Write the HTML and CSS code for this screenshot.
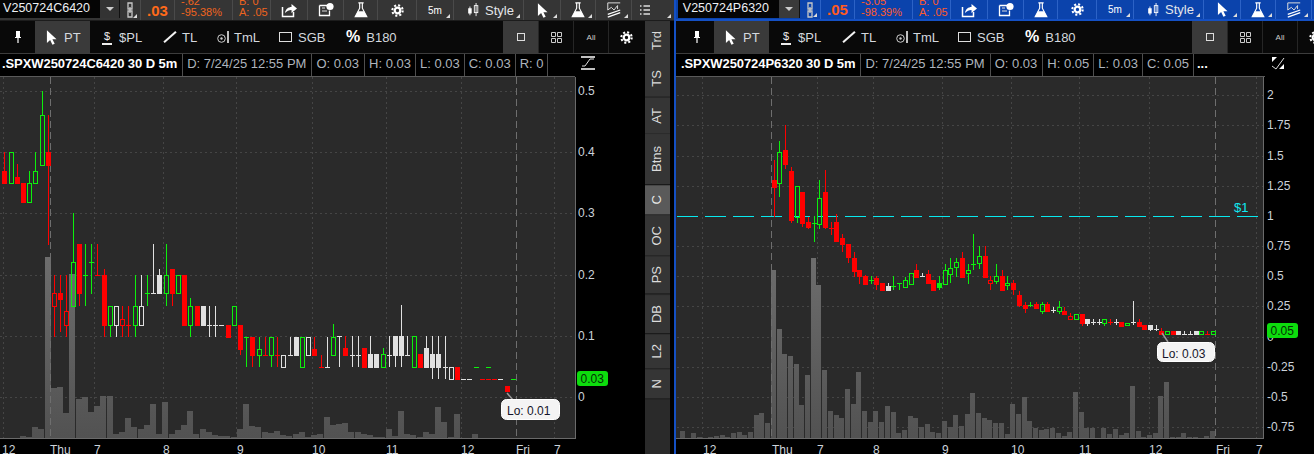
FILE: index.html
```html
<!DOCTYPE html>
<html lang="en">
<head>
<meta charset="utf-8">
<title>Option charts</title>
<link rel="stylesheet" href="styles.css">
</head>
<body>
<svg class="defs" width="0" height="0" aria-hidden="true">
  <symbol id="i-link" viewBox="0 0 8 16"><path d="M2 1h4v6H2zM2 9h4v6H2zM4 5v6" fill="none" stroke="#c8c8c8" stroke-width="1.3"/></symbol>
  <symbol id="i-share" viewBox="0 0 16 16"><path d="M1.500 5v9.500h11V10" fill="none" stroke="#fff" stroke-width="1.500"/><path d="M4 11c.5-4 3.500-6 6.500-6V2L16 6.500 10.500 11V8C8 8 6 9 4 11z" fill="#fff"/></symbol>
  <symbol id="i-note" viewBox="0 0 16 16"><path d="M1.500 3.500h9M1.500 3.500v10h10v-5" fill="none" stroke="#fff" stroke-width="1.300"/><path d="M4 6h3M4 9h5" stroke="#ddd"/><circle cx="12" cy="4.500" r="3.600" fill="#fff"/></symbol>
  <symbol id="i-flask" viewBox="0 0 16 18"><path d="M5 1h6M6.500 1v6L1.500 16.500h13L9.500 7V1" fill="none" stroke="#fff" stroke-width="1.300"/><path d="M4.500 10.500h7l3 6h-13z" fill="#fff"/></symbol>
  <symbol id="i-gear" viewBox="0 0 14 14"><circle cx="7" cy="7" r="3" fill="none" stroke="#fff" stroke-width="2.400"/><circle cx="7" cy="7" r="5.600" fill="none" stroke="#fff" stroke-width="2.200" stroke-dasharray="2.200 2.200"/></symbol>
  <symbol id="i-candle" viewBox="0 0 14 16"><path d="M3.500 4v10M10.500 0v15" stroke="#fff"/><rect x="1.500" y="6" width="4" height="6" fill="#fff"/><rect x="8.500" y="3" width="4" height="8" fill="none" stroke="#fff"/></symbol>
  <symbol id="i-cursor" viewBox="0 0 12 16"><path d="M1 0v14l3.500-3.200L7 16l2.500-1.200L7 9.800h4.500z" fill="#fff"/></symbol>
  <symbol id="i-chart" viewBox="0 0 16 18"><path d="M1 1h14M1 1v8l4-3 3 3 4-5v4" fill="none" stroke="#ddd" stroke-width="1.100"/><path d="M1 14L15 9M1 17l14-5" stroke="#fff" stroke-width="1.400"/></symbol>
  <symbol id="i-menu" viewBox="0 0 12 12"><path d="M1 2h1.500M1 6h1.500M1 10h1.500M4.500 2H11M4.500 6H11M4.500 10H11" stroke="#ddd" stroke-width="1.300"/></symbol>
  <symbol id="i-pin" viewBox="0 0 8 14"><path d="M2 1h4v6H2z" fill="#fff"/><path d="M1 7.500h6M4 7v6" stroke="#fff" stroke-width="1.200"/></symbol>
  <symbol id="i-time" viewBox="0 0 14 12"><circle cx="4.500" cy="7.500" r="3.800" fill="none" stroke="#ccc"/><circle cx="4.500" cy="7.500" r="1.200" fill="#ccc"/><path d="M11 0v12" stroke="#fff" stroke-width="1.500"/></symbol>
  <symbol id="i-one" viewBox="0 0 8 8"><rect x=".5" y=".5" width="7" height="7" fill="none" stroke="#ddd"/></symbol>
  <symbol id="i-four" viewBox="0 0 11 11"><path d="M.5.5h4v4h-4zM6.500.5h4v4h-4zM.5 6.500h4v4h-4zM6.500 6.500h4v4h-4z" fill="none" stroke="#ccc"/></symbol>
  <symbol id="i-curve" viewBox="0 0 14 14"><path d="M0 1h14M0 13h14" stroke="#fff" stroke-width="1.400"/><path d="M1 10h3l5-7h4" fill="none" stroke="#ddd"/></symbol>
  <symbol id="i-expand" viewBox="0 0 14 14"><path d="M1 1h5L1 6zM13 13H8l5-5z" fill="#fff"/><path d="M1 10l4 3 8-11" fill="none" stroke="#ddd"/></symbol>
</svg>

<main class="app">
  <section class="pane pane-left">
    <header class="topbar">
      <div class="sym">V250724C6420</div>
      <div class="dd"><span class="caret"></span></div>
      <div class="cell w-link corner"><svg class="ic-link"><use href="#i-link"/></svg></div>
      <div class="cell w-price price">.03</div>
      <div class="cell w-change quote"><span>-.62</span><span>-95.38%</span></div>
      <div class="cell w-ba quote"><span>B: 0</span><span>A: .05</span></div>
      <div class="cell w-share"><svg class="ic16"><use href="#i-share"/></svg></div>
      <div class="cell w-note"><svg class="ic16"><use href="#i-note"/></svg></div>
      <div class="cell w-flask"><svg class="ic16"><use href="#i-flask"/></svg></div>
      <div class="cell w-gear"><svg class="ic13"><use href="#i-gear"/></svg></div>
      <div class="cell w-5m corner period">5m</div>
      <div class="cell w-style corner style"><svg class="ic14"><use href="#i-candle"/></svg><span>Style</span></div>
      <div class="cell w-share corner"><svg class="ic-cursor"><use href="#i-cursor"/></svg></div>
      <div class="cell w-flask2 corner"><svg class="ic16"><use href="#i-flask"/></svg></div>
      <div class="cell w-note corner"><svg class="ic16"><use href="#i-chart"/></svg></div>
      <div class="cell w-menu corner"><svg class="ic12"><use href="#i-menu"/></svg></div>
    </header>
    <div class="pane-body">
      <div class="chart-col">
        <nav class="toolbar">
          <div class="tool t-pin"><svg class="ic-pin"><use href="#i-pin"/></svg></div>
          <div class="tool t-pt active"><svg class="ic-cursor"><use href="#i-cursor"/></svg><span>PT</span></div>
          <div class="tool t-pl"><span class="dollar">$</span><span>$PL</span></div>
          <div class="tool t-tl"><span class="slash"></span><span>TL</span></div>
          <div class="tool t-tml"><svg class="ic-time"><use href="#i-time"/></svg><span>TmL</span></div>
          <div class="tool t-sgb"><span class="sq"></span><span>SGB</span></div>
          <div class="tool t-b"><b class="pct">%</b><span>B180</span></div>
          <div class="spacer"></div>
          <div class="tool t-lay active"><svg class="ic8"><use href="#i-one"/></svg></div>
          <div class="tool t-lay sep"><svg class="ic11"><use href="#i-four"/></svg></div>
          <div class="tool t-lay sep all">All</div>
          <div class="tool t-lay sep"><svg class="ic13"><use href="#i-gear"/></svg></div>
        </nav>
        <div class="chart-head">
          <div class="cells">
            <div class="hc title">.SPXW250724C6420 30 D 5m</div>
            <div class="hc hc-date">D: 7/24/25 12:55 PM</div>
            <div class="hc hc-open">O: 0.03</div>
            <div class="hc">H: 0.03</div>
            <div class="hc">L: 0.03</div>
            <div class="hc">C: 0.03</div>
            <div class="hc">R: 0</div>
            <div class="hc hc-blank"></div>
          </div>
          <div class="axis-head"><svg class="ic14"><use href="#i-curve"/></svg></div>
        </div>
        <svg class="chart" id="chartL" viewBox="0 77 645 377" width="645" height="377">
          <rect class="plot" x="0" y="77" width="575" height="361"/>
          <g class="g-layer"></g><g class="v-layer"></g><g class="c-layer"></g>
          <path class="frame" d="M575.500 77v361.500H0"/>
          <g class="tick-text">
            <text x="578" y="95">0.5</text><text x="578" y="156">0.4</text><text x="578" y="217">0.3</text>
            <text x="578" y="279">0.2</text><text x="578" y="340">0.1</text><text x="578" y="401">0</text>
            <text x="2" y="454">12</text><text x="50" y="454">Thu</text><text x="94" y="454">7</text>
            <text x="163" y="454">8</text><text x="237" y="454">9</text><text x="312" y="454">10</text>
            <text x="386" y="454">11</text><text x="461" y="454">12</text><text x="516" y="454">Fri</text>
            <text x="554" y="454">7</text>
          </g>
          <rect class="last" x="577" y="371" width="31" height="15" rx="3"/>
          <text class="last-text" x="580.500" y="383">0.03</text>
          <path class="stem" d="M507 393l6 7"/>
          <rect class="call" x="501.500" y="399.500" width="58" height="20" rx="5"/>
          <text class="call-text" x="507" y="415">Lo: 0.01</text>
        </svg>
      </div>
      <aside class="strip">
        <div class="tab">Trd</div><div class="tab">TS</div><div class="tab">AT</div>
        <div class="tab tab-wide">Btns</div><div class="tab on">C</div><div class="tab">OC</div>
        <div class="tab">PS</div><div class="tab">DB</div><div class="tab">L2</div><div class="tab">N</div>
      </aside>
    </div>
  </section>

  <section class="pane pane-right">
    <header class="topbar blue">
      <div class="sym">V250724P6320</div>
      <div class="dd"><span class="caret"></span></div>
      <div class="cell w-link corner"><svg class="ic-link"><use href="#i-link"/></svg></div>
      <div class="cell w-price price">.05</div>
      <div class="cell w-change quote"><span>-3.05</span><span>-98.39%</span></div>
      <div class="cell w-ba quote"><span>B: 0</span><span>A: .05</span></div>
      <div class="cell w-share"><svg class="ic16"><use href="#i-share"/></svg></div>
      <div class="cell w-note"><svg class="ic16"><use href="#i-note"/></svg></div>
      <div class="cell w-flask"><svg class="ic16"><use href="#i-flask"/></svg></div>
      <div class="cell w-gear"><svg class="ic13"><use href="#i-gear"/></svg></div>
      <div class="cell w-5m corner period">5m</div>
      <div class="cell w-style corner style"><svg class="ic14"><use href="#i-candle"/></svg><span>Style</span></div>
      <div class="cell w-share corner"><svg class="ic-cursor"><use href="#i-cursor"/></svg></div>
      <div class="cell w-flask2 corner"><svg class="ic16"><use href="#i-flask"/></svg></div>
      <div class="cell w-note corner"><svg class="ic16"><use href="#i-chart"/></svg></div>
    </header>
    <nav class="toolbar">
      <div class="tool t-pin"><svg class="ic-pin"><use href="#i-pin"/></svg></div>
      <div class="tool t-pt active"><svg class="ic-cursor"><use href="#i-cursor"/></svg><span>PT</span></div>
      <div class="tool t-pl"><span class="dollar">$</span><span>$PL</span></div>
      <div class="tool t-tl"><span class="slash"></span><span>TL</span></div>
      <div class="tool t-tml"><svg class="ic-time"><use href="#i-time"/></svg><span>TmL</span></div>
      <div class="tool t-sgb"><span class="sq"></span><span>SGB</span></div>
      <div class="tool t-b"><b class="pct">%</b><span>B180</span></div>
      <div class="spacer"></div>
      <div class="tool t-lay active"><svg class="ic8"><use href="#i-one"/></svg></div>
      <div class="tool t-lay sep"><svg class="ic11"><use href="#i-four"/></svg></div>
      <div class="tool t-lay sep all">All</div>
      <div class="tool t-lay sep"><svg class="ic13"><use href="#i-gear"/></svg></div>
    </nav>
    <div class="chart-head">
      <div class="cells">
        <div class="hc title">.SPXW250724P6320 30 D 5m</div>
        <div class="hc hc-date">D: 7/24/25 12:55 PM</div>
        <div class="hc hc-open">O: 0.03</div>
        <div class="hc">H: 0.05</div>
        <div class="hc">L: 0.03</div>
        <div class="hc">C: 0.05</div>
        <div class="hc more">...</div>
      </div>
      <div class="axis-head"><svg class="ic14"><use href="#i-expand"/></svg></div>
    </div>
    <svg class="chart" id="chartR" viewBox="676 77 638 377" width="638" height="377">
      <rect class="plot" x="676" y="77" width="587" height="361"/>
      <g class="g-layer"></g><g class="v-layer"></g>
      <path class="price-line" d="M677 216.500H1262"/>
      <text class="price-tag" x="1234" y="212">$1</text>
      <g class="c-layer"></g>
      <path class="frame" d="M1263.500 77v361.500H676"/>
      <g class="tick-text">
        <text x="1267" y="99">2</text><text x="1267" y="129">1.75</text><text x="1267" y="160">1.5</text>
        <text x="1267" y="190">1.25</text><text x="1267" y="220">1</text><text x="1267" y="250">0.75</text>
        <text x="1267" y="280">0.5</text><text x="1267" y="310">0.25</text><text x="1267" y="341">0</text>
        <text x="1267" y="371">-0.25</text><text x="1267" y="401">-0.5</text><text x="1267" y="431">-0.75</text>
        <text x="703" y="454">12</text><text x="772" y="454">Thu</text><text x="817" y="454">7</text>
        <text x="873" y="454">8</text><text x="942" y="454">9</text><text x="1011" y="454">10</text>
        <text x="1079" y="454">11</text><text x="1149" y="454">12</text><text x="1216" y="454">Fri</text>
        <text x="1256" y="454">7</text>
      </g>
      <rect class="last" x="1267" y="323" width="31" height="15" rx="3"/>
      <text class="last-text" x="1270.500" y="335">0.05</text>
      <path class="stem" d="M1162 333l6 9"/>
      <rect class="call" x="1157.500" y="342.500" width="57" height="19" rx="5"/>
      <text class="call-text" x="1162" y="357.500">Lo: 0.03</text>
    </svg>
  </section>
</main>
<script src="chart.js"></script>
</body>
</html>
```
FILE: styles.css
```css
* { box-sizing: border-box; }
html, body { margin: 0; padding: 0; background: #000; overflow: hidden; }
body { font: 13px "Liberation Sans", Arial, sans-serif; color: #bdbdbd; }
.defs { position: absolute; }
svg { display: block; flex: none; }

.app { display: flex; width: 1314px; height: 454px; overflow: hidden; }
.pane { display: flex; flex-direction: column; height: 454px; overflow: hidden; }
.pane-left { width: 674px; flex: none; }
.pane-right { width: 640px; flex: none; border-left: 2px solid #1450c4; }
.pane-body { display: flex; flex: 1; min-height: 0; }
.chart-col { width: 645px; flex: none; display: flex; flex-direction: column; }

/* top quote bar */
.topbar { display: flex; height: 21px; flex: none; background: #353535; border-bottom: 1px solid #1c1c1c; overflow: hidden; }
.topbar.blue { background: #0b43ac; padding-left: 2px; border-bottom: 2px solid #1450c4; }
.sym { width: 100px; height: 18px; flex: none; background: #050505; color: #eef0f4; font-size: 12.500px; text-align: right; padding-right: 10px; line-height: 16px; white-space: nowrap; overflow: hidden; }
.dd { width: 20px; height: 18px; flex: none; background: #333; display: flex; align-items: center; justify-content: center; border-right: 1px solid #111; }
.blue .sym { width: 101px; }
.blue .dd { width: 21px; background: #3a3a3a; }
.caret { width: 0; height: 0; border: 4px solid transparent; border-top: 4px solid #ccc; border-bottom: 0; }
.cell { position: relative; flex: none; display: flex; align-items: center; justify-content: center; height: 20px; border-right: 1px solid #4a4a4a; color: #fff; }
.blue .cell { border-right-color: #2c62c6; height: 19px; }
.corner::after { content: ""; position: absolute; right: 3px; bottom: 2px; width: 0; height: 0; border-left: 4px solid transparent; border-bottom: 4px solid #ddd; }
.w-link { width: 21px; }
.w-price { width: 34px; }
.w-change { width: 58px; }
.w-ba { width: 38px; }
.w-share { width: 37px; }
.w-note { width: 36px; }
.w-flask { width: 34px; }
.w-flask2 { width: 35px; }
.w-gear { width: 39px; }
.w-5m { width: 37px; }
.w-style { width: 70px; }
.w-menu { width: 42px; border-right: 0; padding-right: 16px; }
.price { font-weight: 700; font-size: 15px; color: #ff6a1a; }
.blue .price { color: #ff5a1e; }
.quote { flex-direction: column; align-items: flex-start; justify-content: flex-start; padding-left: 6px; font-size: 11px; line-height: 11px; color: #f0641e; }
.blue .quote { color: #ff5a2a; }
.quote span:first-child { margin-top: -4px; }
.period { font-size: 10px; }
.style { justify-content: flex-start; gap: 5px; padding-left: 12px; color: #e4e6ea; }
.ic-link { width: 8px; height: 16px; }
.ic16 { width: 16px; height: 16px; }
.ic14 { width: 14px; height: 14px; }
.ic13 { width: 13px; height: 13px; }
.ic12 { width: 12px; height: 12px; }
.ic11 { width: 11px; height: 11px; }
.ic8 { width: 8px; height: 8px; }
.ic-cursor { width: 11px; height: 15px; }
.ic-pin { width: 8px; height: 14px; }
.ic-time { width: 14px; height: 12px; }

/* tool row */
.toolbar { display: flex; height: 33px; flex: none; background: #090909; border-bottom: 1px solid #3c3c3c; overflow: hidden; }
.pane-right .toolbar { padding-left: 3px; }
.tool { flex: none; display: flex; align-items: center; gap: 6px; color: #d4d8de; }
.active { background: #3a3a3a; }
.t-pin { width: 35px; justify-content: center; }
.t-pt { width: 55px; padding-left: 11px; gap: 7px; }
.t-pl { width: 65px; padding-left: 12px; gap: 7px; }
.t-tl { width: 50px; padding-left: 8px; gap: 5px; }
.t-tml { width: 63px; padding-left: 12px; gap: 3px; }
.t-sgb { width: 68px; padding-left: 11px; }
.t-b { width: 74px; padding-left: 10px; gap: 6px; }
.spacer { width: 93px; flex: none; }
.pane-right .spacer { width: 103px; }
.t-lay { width: 35px; justify-content: center; }
.sep { border-left: 1px solid #262626; }
.all { font-size: 8px; color: #ccc; }
.dollar { width: 10px; font-size: 11px; color: #eee; text-align: center; line-height: 13px; border-bottom: 2px solid #eee; }
.slash { width: 16px; height: 2px; margin: 0 -1px; background: #f2f2f2; transform: rotate(-42deg); }
.sq { width: 13px; height: 10px; border: 1px solid #ddd; }
.pct { font-size: 16px; color: #fff; }

/* study header */
.chart-head { display: flex; height: 23px; flex: none; background: #000; }
.cells { width: 575px; flex: none; display: flex; border-bottom: 1px solid #5a5a5a; }
.pane-right .cells { width: 589px; padding-left: 3px; }
.hc { flex: none; padding: 0 4px; line-height: 20px; color: #aeb4bc; border-right: 1px solid #4e4e4e; white-space: nowrap; }
.hc:last-child { border-right: 0; }
.hc-blank { flex: 1; }
.title { padding: 0 5px 0 2px; color: #fff; font-weight: 700; letter-spacing: -.08px; }
.hc-date { padding-right: 5px; }
.hc-open { padding-right: 5px; }
.more { color: #fff; font-weight: 700; padding-left: 3px; }
.axis-head { flex: 1; padding: 2px 0 0 6px; }

/* charts */
.chart { flex: none; background: #000; }
.chart rect, .chart line, .frame { shape-rendering: crispEdges; }
.plot { fill: #2a2a2a; }
.frame { fill: none; stroke: #6a6a6a; }
.grid { stroke: #454545; stroke-dasharray: 2 3; }
.day { stroke: #6e6e6e; stroke-dasharray: 7 4; }
.tick-text text { font: 12px "Liberation Sans", Arial, sans-serif; fill: #ccd3da; }
.price-line { fill: none; stroke: #08e8ee; stroke-width: 1; stroke-dasharray: 21 7; shape-rendering: crispEdges; }
.price-tag { font: 13px "Liberation Sans", Arial, sans-serif; fill: #10e8f0; }
.chart .last { fill: #0ddc0d; shape-rendering: geometricPrecision; }
.last-text { font: 12px "Liberation Sans", Arial, sans-serif; fill: #063006; }
.stem { stroke: #9a9a9a; stroke-width: 1.500; fill: none; }
.chart .call { fill: #f4f4f4; stroke: #fff; shape-rendering: geometricPrecision; }
.call-text { font: 12px "Liberation Sans", Arial, sans-serif; fill: #14142a; }

/* side tabs */
.strip { width: 25px; flex: none; display: flex; flex-direction: column; background: #2a2a2a; }
.tab { writing-mode: vertical-rl; transform: rotate(180deg); padding: 10px 0; text-align: center; line-height: 24px; background: #353535; color: #dcdcdc; border-top: 1px solid #1a1a1a; }
.tab:first-child { border-top: 0; }
.tab-wide { padding: 12px 0; }
.tab.on { background: #5a5a5a; color: #e8e8e8; }
```
FILE: chart.js
```js
var NS = "http://www.w3.org/2000/svg";
var COLORS = { r: "#ff0000", g: "#0cf00c", w: "#e0e0e0" };

function el(parent, tag, attrs) {
  var node = document.createElementNS(NS, tag);
  for (var k in attrs) node.setAttribute(k, attrs[k]);
  parent.appendChild(node);
  return node;
}
function bar(parent, x, y1, y2, fill) {
  if (y2 <= y1) y2 = y1 + 1;
  el(parent, "rect", { x: x, y: y1, width: 1, height: y2 - y1, fill: fill });
}
function candle(g, x, c, toY) {
  var col = COLORS[c[0][0]], kind = c[0][1];
  var top = Math.round(toY(c[1])), bt = Math.round(toY(c[2])), bb = Math.round(toY(c[3])), bot = Math.round(toY(c[4]));
  var cx = Math.round(x);
  if (kind === "d") {
    if (bot > top) bar(g, cx, top, bot, col);
    el(g, "rect", { x: cx - 2, y: bt, width: 5, height: 1, fill: col });
    return;
  }
  if (bt > top) bar(g, cx, top, bt, col);
  if (bot > bb) bar(g, cx, bb, bot, col);
  if (kind === "s") {
    el(g, "rect", { x: cx - 2, y: bt, width: 5, height: Math.max(bb - bt, 1) + 1, fill: col });
  } else {
    el(g, "rect", { x: cx - 1.5, y: bt + 0.5, width: 4, height: Math.max(bb - bt, 1), fill: "none", stroke: col });
  }
}
function build(cfg) {
  var svg = document.getElementById(cfg.id);
  var grid = svg.querySelector(".g-layer"), vol = svg.querySelector(".v-layer"), can = svg.querySelector(".c-layer");
  cfg.hLines.forEach(function (y) { el(grid, "line", { "class": "grid", x1: cfg.x0, x2: cfg.x1, y1: y + 0.5, y2: y + 0.5 }); });
  cfg.vLines.forEach(function (x) { el(grid, "line", { "class": "grid", x1: x + 0.5, x2: x + 0.5, y1: 77, y2: 438 }); });
  var defs = el(svg, "defs", {});
  var grad = el(defs, "linearGradient", { id: cfg.id + "g", gradientUnits: "userSpaceOnUse", x1: 0, x2: 0, y1: 250, y2: 438 });
  el(grad, "stop", { offset: 0, "stop-color": "#6e6e6e" });
  el(grad, "stop", { offset: 1, "stop-color": "#525252" });
  cfg.vol.forEach(function (y, i) {
    var px = cfg.xAt(i - cfg.volStart);
    if (y < 438) el(vol, "rect", { x: Math.round(px - cfg.pitch / 2), y: Math.round(y), width: Math.floor(cfg.pitch), height: 438 - Math.round(y), fill: "url(#" + cfg.id + "g)" });
  });
  cfg.days.forEach(function (x) { el(vol, "line", { "class": "day", x1: x + 0.5, x2: x + 0.5, y1: 77, y2: 438 }); });
  cfg.candles.forEach(function (set) {
    set.list.forEach(function (c, i) { candle(can, cfg.xAt(set.start + i), c, set.toY); });
  });
  (cfg.extra || []).forEach(function (e) { candle(can, cfg.xAt(e[0]), e[1], cfg.candles[0].toY); });
}

/* Left chart: y values are thirds of a pixel from y = 264 */
var z264 = function (z) { return 264 + z / 3; };
var leftCandles = [
  ["rs",-336,-280,-242,-242],["gh",-335,-335,-242,-242],["rs",-300,-260,-242,-242],["rs",-242,-242,-187,-187],
  ["gh",-280,-242,-187,-187],["gh",-336,-278,-242,-242],["gh",-519,-446,-298,-298],["rs",-446,-336,-298,-57],
  ["rh",33,88,125,218],["rs",33,88,106,205],["rh",33,142,183,218],["gh",-154,-5,125,125],["rs",-60,-60,88,125],
  ["gd",-60,34,34,125],["gd",-60,-5,-5,90],["rd",-60,33,33,33],["rs",15,33,183,218],["gh",125,125,183,218],
  ["wh",125,125,183,218],["rh",125,164,183,218],["rd",125,183,183,218],["gh",33,125,183,218],["wh",33,125,183,183],
  ["gd",33,88,88,125],["wd",-60,88,88,88],["ws",15,33,88,88],["gh",-60,33,88,125],["rs",15,15,88,125],["gh",33,33,88,88],
  ["rs",33,33,183,183],["gh",103,125,183,218],["rs",125,125,183,183],["ws",125,125,183,183],["wd",125,183,183,218],
  ["wd",125,183,183,218],["wd",183,183,183,183],["rs",183,183,218,218],["gh",125,125,183,183],["rs",183,183,255,272],
  ["gd",218,218,218,310],["rs",218,218,272,310],["gh",218,255,272,310],["rd",218,272,272,272],["gh",218,218,272,310],
  ["rd",218,272,272,310],["wh",272,272,310,310],["wd",218,272,272,272],["ws",218,218,272,272],["gh",218,218,310,310],
  ["wh",218,218,272,272],["rs",218,254,272,272],["rd",272,310,310,310],["wd",218,310,310,310],
  ["gh",180,218,272,272],["wd",216,216,216,310],["rs",216,252,272,272],["wd",216,272,272,310],["wd",216,272,272,310],
  ["rs",252,252,310,310],["ws",216,270,310,310],["ws",270,270,310,310],["gh",252,270,310,310],["wd",216,272,272,310],
  ["ws",216,216,272,310],["ws",123,216,272,310],["wd",216,272,272,272],["gh",216,216,310,310],["rs",270,270,310,310],
  ["ws",216,252,310,310],["ws",216,270,310,345],["ws",216,270,310,345],["wd",216,310,310,345],["wh",310,310,345,345],
  ["rs",310,310,345,345],["wd",345,345,345,345],["wd",345,345,345,345],["gd",310,310,310,310],["rd",345,345,345,345],
  ["gd",310,310,310,310],["rd",345,345,345,345],["wd",345,345,345,345],["rs",365,365,381,381],["gd",345,345,345,345]
];
var leftVol = [523,523,523,516,518,490,495,-21,372,369,447,30,405,400,444,425,397,397,510,505,462,490,495,483,420,510,413,510,497,483,441,510,495,505,512,517,515,518,495,420,487,490,505,507,500,513,517,510,503,520,512,510,460,482,480,477,503,505,510,514,520,518,495,515,440,510,513,518,505,510,430,473,520,450,521,521,510,522,522,522,522,522,522];

build({
  id: "chartL", x0: 0, x1: 575, pitch: 6.2, volStart: 0,
  xAt: function (i) { return 4.33 + 6.2 * i; },
  hLines: [91, 152, 213, 275, 336, 397],
  vLines: [3, 94, 163, 236, 312, 386, 461, 554],
  days: [50, 516],
  vol: leftVol.map(z264),
  candles: [{ start: 0, list: leftCandles, toY: z264 }],
  extra: [[78, ["rd",345,345,345,345]]]
});

/* Right chart: candle y values are thirds of a pixel from y = 110 */
var z110 = function (z) { return 110 + z / 3; };
var rightCandles = [
  ["rs",150,210,232,320],["gh",92,127,220,262],["rs",44,120,162,178],["rs",172,183,330,340],["gh",229,229,320,338],
  ["rs",246,246,340,352],["rs",320,337,350,358],["gd",318,338,338,397],["gh",210,265,341,358],["rs",180,246,350,358],
  ["rd",335,353,353,375],["rs",312,336,392,392],["rs",372,384,402,425],["rs",402,402,442,458],["rs",425,445,484,502],
  ["rs",480,480,498,522],["rs",495,498,522,522],["gd",498,511,511,522],["rs",497,504,522,540],["rs",520,520,540,540],
  ["ws",520,529,540,540],["gd",498,529,529,540],["gd",520,520,520,540],["gh",500,511,530,530],["gh",490,490,521,521],
  ["rs",462,480,500,500],["wd",490,497,497,500],["rs",480,492,520,520],["rs",511,511,540,540],["gs",498,520,530,540],
  ["gh",462,481,521,521],["gh",444,475,492,520],["gh",444,457,472,500],["rs",425,444,500,500],["gh",462,481,488,522],
  ["gd",371,463,463,481],["gh",408,439,458,477],["rs",408,438,500,500],["rh",498,511,520,540],["gh",462,499,512,522],
  ["rs",480,498,540,540],["gh",498,520,526,540],
  ["rs",510,520,538,555],["rs",542,556,584,592],["rs",575,584,593,610],["gd",575,584,584,592],["rs",575,583,593,593],
  ["gh",575,583,602,612],["rs",575,583,602,602],["wd",592,601,601,610],["gh",573,592,602,612],["rs",592,602,611,611],
  ["rh",610,618,628,628],["gh",611,611,628,628],["rs",611,611,638,648],["ws",628,628,638,648],["wd",628,637,637,646],
  ["wd",628,637,637,646],["gh",628,628,638,648],["rd",628,637,637,646],["wd",628,637,637,646],["rs",637,637,647,647],
  ["gh",638,638,646,646],["wd",573,637,637,646],["rs",628,637,647,647],["rs",646,646,656,656],["ws",646,646,656,664],
  ["wd",646,656,656,664],["rs",654,664,671,671],["gh",664,664,671,671],["rs",664,664,671,671],["ws",664,664,671,671],
  ["wd",664,671,671,671],["wd",664,671,671,671],["ws",664,664,671,671],["gh",664,664,671,671],["rd",664,671,671,671],
  ["gh",664,664,671,671]
];
var rightVol = [423,445,430,440,443,441,438,434,441,430,426,435,427,375,370,399,-60,117,191,198,222,345,255,-95,-15,240,362,375,384,297,342,246,363,397,363,397,348,367,430,420,378,384,410,403,427,430,393,411,375,408,372,309,369,384,391,400,400,432]
  .concat([642,672,620,692,713,720,716,713,730,737,727,606,666,714,714,745,713,733,716,735,730,588,723,740,735,730,618,576,741,741,729,741,741,743,739,723].map(function (z) { return z - 300; }))
  .map(function (z) { return 290 + z / 3; });

build({
  id: "chartR", x0: 677, x1: 1263, pitch: 5.7, volStart: 16,
  xAt: function (k) { return 773.7 + 5.7 * k; },
  hLines: [95, 125, 156, 186, 246, 276, 306, 337, 367, 397, 427],
  vLines: [702, 817, 873, 942, 1011, 1079, 1149, 1256],
  days: [771, 1215],
  vol: rightVol,
  candles: [{ start: 0, list: rightCandles, toY: z110 }]
});
```
